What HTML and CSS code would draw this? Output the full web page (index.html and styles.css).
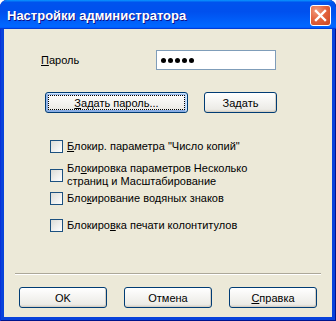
FILE: index.html
```html
<!DOCTYPE html>
<html>
<head>
<meta charset="utf-8">
<link rel="stylesheet" href="styles.css">
</head>
<body>
<div class="window">
  <div class="titlebar">
    <span class="title">Настройки администратора</span>
    <span class="close">
      <svg width="13" height="13" viewBox="0 0 13 13"><path d="M2 2 L11 11 M11 2 L2 11" stroke="#fff" stroke-width="2.4" stroke-linecap="square"/></svg>
    </span>
  </div>
  <div class="content">
    <div class="pwrow">
      <span class="label"><u>П</u>ароль</span>
      <span class="input"><span class="dot"></span><span class="dot"></span><span class="dot"></span><span class="dot"></span><span class="dot"></span></span>
    </div>
    <div class="btnrow">
      <button class="btn btn-default btn-wide"><span class="focus"><u>З</u>адать пароль...</span></button>
      <button class="btn btn-set">За<u>д</u>ать</button>
    </div>
    <div class="checks">
      <div class="check c1"><span class="box"></span><span class="ctext"><u>Б</u>локир. параметра "Число копий"</span></div>
      <div class="check c2"><span class="box"></span><span class="ctext">Бл<u>о</u>кировка параметров Несколько<br>страниц и Масштабирование</span></div>
      <div class="check c3"><span class="box"></span><span class="ctext">Бло<u>к</u>ирование водяных знаков</span></div>
      <div class="check c4"><span class="box"></span><span class="ctext">Блокиро<u>в</u>ка печати колонтитулов</span></div>
    </div>
    <div class="sep"></div>
    <div class="bottom">
      <button class="btn btn-std">OK</button>
      <button class="btn btn-std">Отмена</button>
      <button class="btn btn-std"><u>С</u>правка</button>
    </div>
  </div>
</div>
</body>
</html>
```
FILE: styles.css
```css
html, body {
  margin: 0;
  padding: 0;
}
body {
  width: 336px;
  height: 321px;
  overflow: hidden;
  font-family: "Liberation Sans", Arial, sans-serif;
  font-size: 11px;
  color: #000;
}
.window {
  width: 336px;
  height: 321px;
  display: flex;
  flex-direction: column;
  background: #0842DB;
  box-shadow: inset 1px 0 #0831D9, inset -1px 0 #00138C, inset 0 -1px #00138C;
  border-radius: 7px 7px 0 0;
  overflow: hidden;
}
.titlebar {
  height: 29px;
  flex: none;
  display: flex;
  align-items: center;
  padding: 0 7px 0 7px;
  background: linear-gradient(180deg, #0997ff 0, #0053ee 8%, #0050ee 40%, #0066ff 88%, #0066ff 93%, #005bff 95%, #003dd7 96%, #003dd7 100%);
  border-radius: 7px 7px 0 0;
  box-sizing: border-box;
}
.title {
  flex: 1;
  color: #fff;
  font-family: "Liberation Sans", Arial, sans-serif;
  font-weight: bold;
  font-size: 13px;
  text-shadow: 1px 1px #0F1089;
  padding-top: 1px;
}
.close {
  width: 21px;
  height: 21px;
  box-sizing: border-box;
  border: 1px solid #fff;
  border-radius: 3px;
  background: radial-gradient(circle at 30% 25%, #F19B7E 0, #E4653F 45%, #CC4620 100%);
  display: flex;
  align-items: center;
  justify-content: center;
  margin-right: -2px;
  margin-top: 2px;
}
.close svg { display: block; }
.content {
  flex: 1;
  margin: 0 4px 4px 4px;
  background: #ECE9D8;
  display: flex;
  flex-direction: column;
}
.pwrow {
  display: flex;
  align-items: center;
  margin-top: 21px;
  padding-left: 37px;
  height: 20px;
}
.label {
  width: 115px;
}
u { text-decoration: underline; text-underline-offset: 1px; }
.input {
  width: 120px;
  height: 20px;
  box-sizing: border-box;
  border: 1px solid #7F9DB9;
  background: #fff;
  display: flex;
  align-items: center;
  gap: 2px;
  padding-left: 4px;
}
.dot {
  width: 5px;
  height: 5px;
  border-radius: 50%;
  background: #000;
}
.btnrow {
  display: flex;
  margin-top: 22px;
  padding-left: 41px;
  gap: 16px;
}
.btn {
  height: 21px;
  box-sizing: border-box;
  border: 1px solid #003C74;
  border-radius: 3px;
  background: linear-gradient(180deg, #fff 0, #ECEBE6 86%, #D6D0C5 100%);
  box-shadow: inset -1px -1px #D6D0C5;
  font-family: "Liberation Sans", Arial, sans-serif;
  font-size: 11px;
  color: #000;
  padding: 0;
  display: flex;
  align-items: center;
  justify-content: center;
}
.btn-default {
  box-shadow: inset -1px 1px #CEE7FF, inset 1px 2px #98B8EA, inset -2px 2px #BCD4F6, inset 1px -1px #89ADE4, inset 2px -2px #89ADE4;
}
.btn-wide { width: 143px; }
.btn-set { width: 73px; }
.focus {
  display: flex;
  align-items: center;
  justify-content: center;
  width: calc(100% - 6px);
  height: calc(100% - 6px);
  outline: 1px dotted #000;
}
.checks {
  display: flex;
  flex-direction: column;
  padding-left: 46px;
}
.check {
  display: flex;
  align-items: center;
  line-height: 13px;
}
.c1 { margin-top: 27px; }
.c2 { margin-top: 9px; }
.c3 { margin-top: 4px; }
.c4 { margin-top: 14px; }
.box {
  width: 13px;
  height: 13px;
  box-sizing: border-box;
  border: 1px solid #1C5180;
  background: linear-gradient(135deg, #DCDCD7 0, #FFFFFF 100%);
  flex: none;
  margin-right: 4px;
}
.sep {
  margin: 41px 11px 0 11px;
  border-top: 1px solid #ACA899;
  border-bottom: 1px solid #fff;
}
.bottom {
  display: flex;
  gap: 17px;
  padding-left: 15px;
  margin-top: 12px;
}
.btn-std { width: 88px; }
```
